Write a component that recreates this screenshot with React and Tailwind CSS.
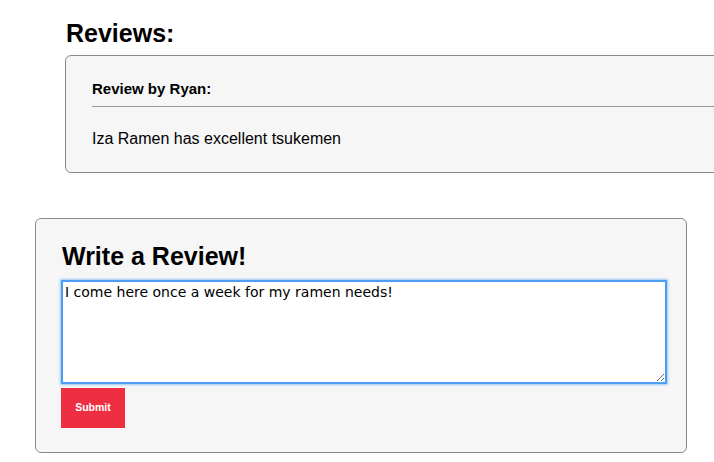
import React from "react";

const ReviewCard = ({ author, text }) => (
  <div className="w-[760px] rounded-md border border-[#8a8a8a] bg-[#f6f6f6] px-[26px] pt-[24px] pb-[23px]">
    <h3 className="text-[15px] font-bold leading-[18px] pb-[8px] border-b border-[#9a9a9a]">
      Review by {author}:
    </h3>
    <p className="mt-[22px] text-[16px] leading-[20px]">{text}</p>
  </div>
);

export default function App() {
  return (
    <div
      className="w-[714px] h-[462px] overflow-hidden bg-white text-black"
      style={{ fontFamily: '"Liberation Sans", Arial, sans-serif' }}
    >
      <section className="ml-[65px] pt-[18px]">
        <h2 className="text-[25px] font-bold leading-[30px] mb-[7px] ml-px">Reviews:</h2>
        <ReviewCard author="Ryan" text="Iza Ramen has excellent tsukemen" />
      </section>

      <section className="ml-[35px] mt-[45px] w-[652px] rounded-md border border-[#8a8a8a] bg-[#f6f6f6] px-[25px] pt-[22px] pb-[24px]">
        <h2 className="text-[25px] font-bold leading-[30px] mb-[9px] ml-px">Write a Review!</h2>
        <textarea
          className="block w-[606px] h-[104px] resize-y bg-white border-2 border-[#4c9ef2] shadow-[0_0_2px_1px_#9fcbf6] px-[2px] py-[2px] text-[14px] leading-[17px] outline-none"
          style={{ fontFamily: '"DejaVu Sans", sans-serif' }}
          defaultValue="I come here once a week for my ramen needs!"
        />
        <button className="mt-[4px] block w-[64px] h-[40px] bg-[#ee2f42] text-white text-[10.5px] font-bold">
          Submit
        </button>
      </section>
    </div>
  );
}
